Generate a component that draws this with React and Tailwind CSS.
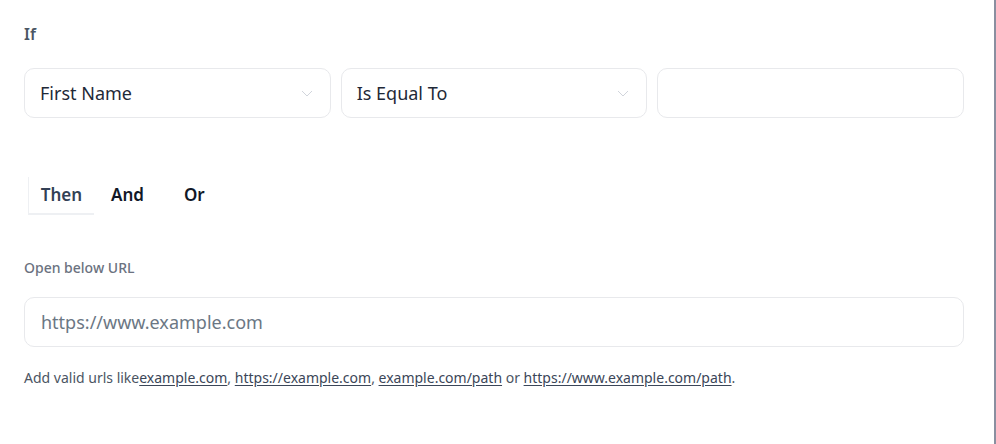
import React from "react";

function Chevron() {
  return (
    <svg width="14" height="14" viewBox="0 0 14 14" fill="none" className="text-gray-300">
      <path d="M2 5l5 5 5-5" stroke="currentColor" strokeWidth="1" />
    </svg>
  );
}

function SelectBox({ label }) {
  return (
    <div className="h-[50px] flex items-center justify-between rounded-[10px] border border-[#e8e9ec] bg-white pl-[15px] pr-[16px]">
      <span className="text-[18px] text-[#1f2937]">{label}</span>
      <Chevron />
    </div>
  );
}

export default function App() {
  const link = "underline underline-offset-2 text-[#3b4658]";
  return (
    <div
      className="w-[996px] h-[444px] bg-white flex"
      style={{ fontFamily: "'Noto Sans', 'Open Sans', sans-serif" }}
    >
      <div className="flex-1 pl-6 pr-[30px] pt-[22px]">
        <div className="text-[16px] font-semibold text-[#4b5563] leading-6">If</div>

        <div className="mt-[22px] grid grid-cols-3 gap-[10px]">
          <SelectBox label="First Name" />
          <SelectBox label="Is Equal To" />
          <div className="h-[50px] rounded-[10px] border border-[#e8e9ec] bg-white" />
        </div>

        <div className="mt-[59px] flex items-center pl-1 text-[17px] font-semibold">
          <div className="h-[36px] w-[66px] flex items-center justify-center border-l border-[#eef0f3] shadow-[0_2px_0_#eef0f3] text-[#334155]">
            Then
          </div>
          <div className="ml-[17px] text-[#111827]">And</div>
          <div className="ml-[40px] text-[#111827]">Or</div>
        </div>

        <div className="mt-[45px] text-[14px] font-medium text-[#6b7280] leading-5">
          Open below URL
        </div>

        <div className="mt-[19px] h-[50px] flex items-center rounded-[10px] border border-[#e8e9ec] pl-[16px] text-[18px] text-[#6b7784]">
          https://www.example.com
        </div>

        <div className="mt-[20px] text-[14px] text-[#4b5563]">
          Add valid urls like<a className={link}>example.com</a>,{" "}
          <a className={link}>https://example.com</a>,{" "}
          <a className={link}>example.com/path</a> or{" "}
          <a className={link}>https://www.example.com/path</a>.
        </div>
      </div>
      <div className="w-[2px] bg-[#8a8fa0]" />
    </div>
  );
}
